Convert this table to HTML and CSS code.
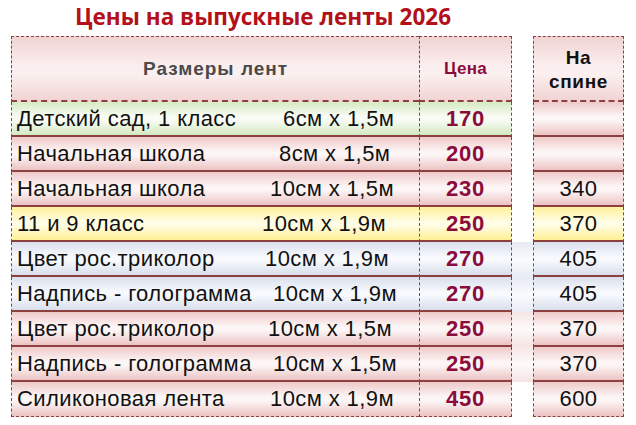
FILE: index.html
```html
<!DOCTYPE html>
<html lang="ru">
<head>
<meta charset="utf-8">
<title>Цены на выпускные ленты 2026</title>
<link rel="stylesheet" href="styles.css">
</head>
<body>
<div class="page">
  <h1 class="title">Цены на выпускные ленты 2026</h1>
  <div class="grid">
    <div class="cell name head pink-h hd-name">Размеры лент</div>
    <div class="cell price head pink-h hd-price">Цена</div>
    <div class="gap"></div>
    <div class="cell side head pink-h hd-side">На<br>спине</div>

    <div class="cell name green"><span class="n">Детский сад, 1 класс</span><span class="d d1">6см х 1,5м</span></div>
    <div class="cell price green">170</div>
    <div class="gap"></div>
    <div class="cell side pink"></div>

    <div class="cell name pink"><span class="n">Начальная школа</span><span class="d d2">8см х 1,5м</span></div>
    <div class="cell price pink">200</div>
    <div class="gap"></div>
    <div class="cell side pink"></div>

    <div class="cell name pink"><span class="n">Начальная школа</span><span class="d d3">10см х 1,5м</span></div>
    <div class="cell price pink">230</div>
    <div class="gap"></div>
    <div class="cell side pink">340</div>

    <div class="cell name yellow"><span class="n">11 и 9 класс</span><span class="d d4">10см х 1,9м</span></div>
    <div class="cell price yellow">250</div>
    <div class="gap"></div>
    <div class="cell side yellow">370</div>

    <div class="cell name blue"><span class="n">Цвет рос.триколор</span><span class="d d5">10см х 1,9м</span></div>
    <div class="cell price blue">270</div>
    <div class="gap gap-blue"></div>
    <div class="cell side blue">405</div>

    <div class="cell name blue"><span class="n">Надпись - голограмма</span><span class="d d6">10см х 1,9м</span></div>
    <div class="cell price blue">270</div>
    <div class="gap gap-blue"></div>
    <div class="cell side blue">405</div>

    <div class="cell name pink"><span class="n">Цвет рос.триколор</span><span class="d d7">10см х 1,5м</span></div>
    <div class="cell price pink">250</div>
    <div class="gap gap-pink"></div>
    <div class="cell side pink">370</div>

    <div class="cell name pink"><span class="n">Надпись - голограмма</span><span class="d d8">10см х 1,5м</span></div>
    <div class="cell price pink">250</div>
    <div class="gap gap-pink"></div>
    <div class="cell side pink">370</div>

    <div class="cell name pink last"><span class="n">Силиконовая лента</span><span class="d d9">10см х 1,9м</span></div>
    <div class="cell price pink last">450</div>
    <div class="gap"></div>
    <div class="cell side pink last">600</div>
  </div>
</div>
</body>
</html>
```
FILE: styles.css
```css
html, body {
  margin: 0;
  padding: 0;
  background: #ffffff;
}
.page {
  width: 636px;
  height: 425px;
  overflow: hidden;
  font-family: "Liberation Sans", Arial, sans-serif;
}
.title {
  margin: 0;
  height: 36px;
  padding-left: 75px;
  box-sizing: border-box;
  padding-top: 2px;
  font-family: "Open Sans", "Noto Sans", sans-serif;
  font-weight: 700;
  font-size: 22.5px;
  line-height: 30px;
  color: #b3101a;
  letter-spacing: 0;
  white-space: nowrap;
}
.grid {
  margin-left: 11px;
  display: grid;
  grid-template-columns: 408px 93px 21px 91px;
  grid-template-rows: 66px repeat(9, 35px);
}
.cell {
  box-sizing: border-box;
  border-bottom: 2px solid #8c4040;
  display: flex;
  align-items: center;
  font-size: 22px;
  letter-spacing: 0.4px;
  color: #111;
  white-space: nowrap;
}
.head {
  border-top: 1px dashed #8c4040;
  border-bottom: 2px dashed #8c4040;
  font-weight: 700;
  justify-content: center;
}
.last {
  border-bottom: 1px dashed #8c4040;
}
.name {
  position: relative;
  border-left: 1px dashed #8c4040;
  padding-left: 5px;
}
.price {
  border-left: 1px dashed #8c4040;
  border-right: 1px dashed #8c4040;
  justify-content: center;
  font-weight: 700;
  letter-spacing: 0.8px;
  color: #8a0c3c;
}
.side {
  border-left: 1px dashed #8c4040;
  border-right: 1px dashed #8c4040;
  justify-content: center;
  text-align: center;
}
.hd-name {
  color: #4a4a4a;
  font-size: 19px;
  letter-spacing: 1px;
  padding-left: 0;
  justify-content: center;
}
.hd-price {
  font-size: 17px;
  letter-spacing: 0.3px;
  color: #8a0c3c;
}
.hd-side {
  font-size: 19px;
  letter-spacing: 0.6px;
  line-height: 24px;
  color: #111;
  padding-top: 2px;
}
.n {
  flex: 0 0 auto;
}
.d {
  position: absolute;
}
.d1 { left: 271px; }
.d2 { left: 267px; }
.d3 { left: 258px; }
.d4 { left: 250px; }
.d5 { left: 253px; }
.d6 { left: 261px; }
.d7 { left: 256px; }
.d8 { left: 261px; }
.d9 { left: 258px; }

.pink-h {
  background: linear-gradient(180deg, #f1d3d3 0%, #fbeeee 45%, #fbefef 60%, #f1d4d4 100%);
}
.pink {
  background: linear-gradient(180deg, #efc9c9 0%, #fdf6f6 45%, #fdf6f6 55%, #ecc3c3 100%);
}
.green {
  background: linear-gradient(180deg, #d5eac3 0%, #f9fcf5 45%, #f9fcf5 55%, #d3e8c0 100%);
}
.yellow {
  background: linear-gradient(180deg, #fff09a 0%, #fffde6 45%, #fffde6 55%, #ffee94 100%);
}
.blue {
  background: linear-gradient(180deg, #d9dfec 0%, #f7f9fc 45%, #f7f9fc 55%, #d8deeb 100%);
}
.gap-blue {
  background: linear-gradient(180deg, #e6eaf3 0%, #fafbfd 50%, #e8ecf4 100%);
}
.gap-pink {
  background: linear-gradient(180deg, #f7e6e6 0%, #fefafa 50%, #f6e3e3 100%);
}
```
